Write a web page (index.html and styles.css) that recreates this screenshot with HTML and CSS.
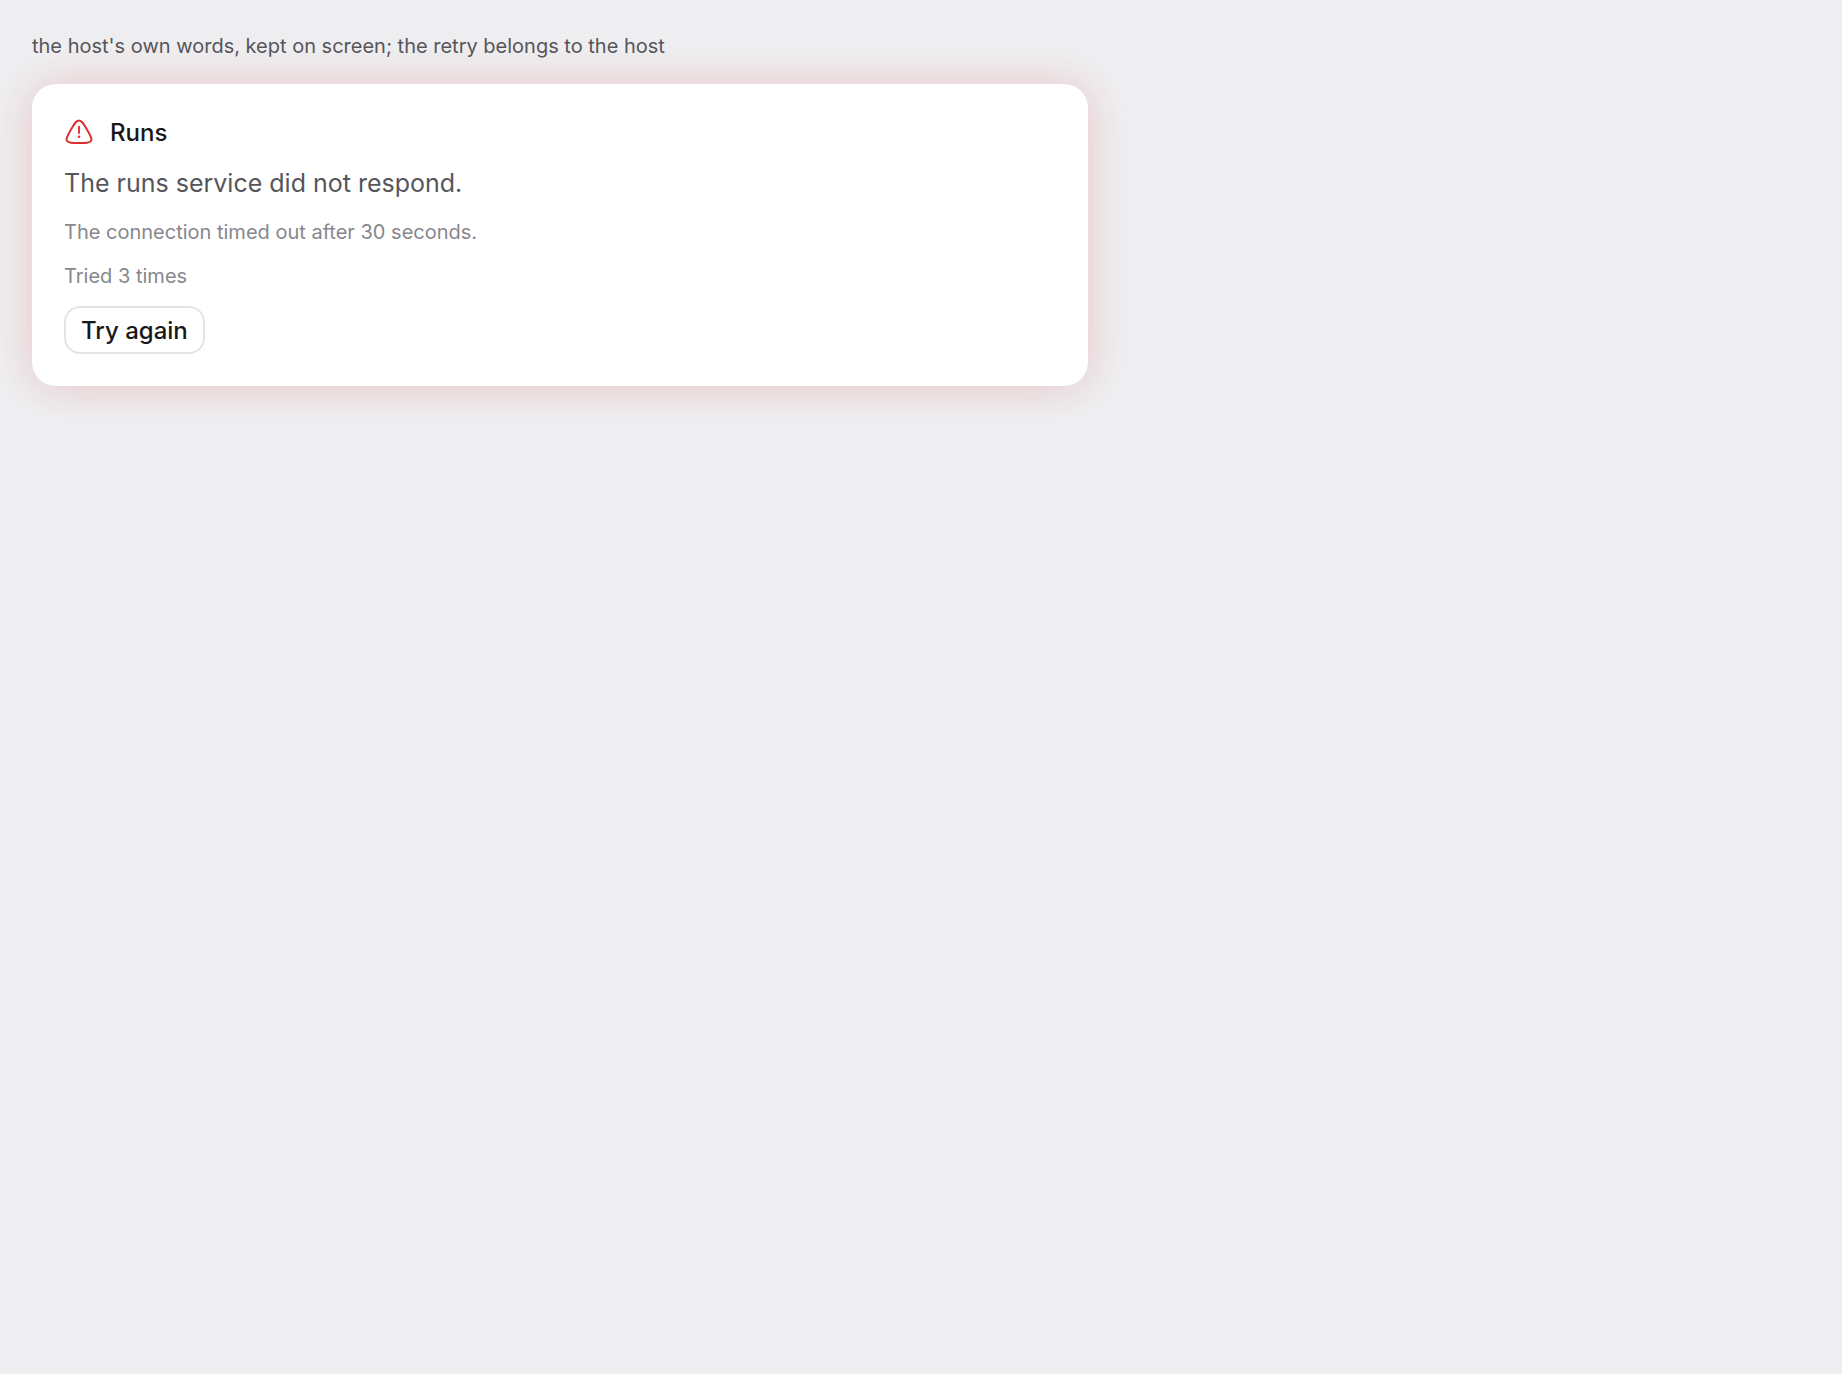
FILE: index.html
```html
<!DOCTYPE html>
<html lang="en">
<head>
    <meta charset="UTF-8">
    <meta name="viewport" content="width=device-width, initial-scale=1.0">
    <title>Runs</title>
    <link rel="stylesheet" href="styles.css">
</head>
<body>
    <main class="page">
        <p class="caption">the host's own words, kept on screen; the retry belongs to the host</p>
        <section class="card">
            <div class="card-header">
                <svg class="icon" viewBox="0 1 24 24" fill="none" aria-hidden="true">
                    <path stroke="currentColor" stroke-width="1.5" d="M5.312 10.762C8.23 5.587 9.689 3 12 3c2.31 0 3.77 2.587 6.688 7.762l.364.645c2.425 4.3 3.638 6.45 2.542 8.022S17.786 21 12.364 21h-.728c-5.422 0-8.134 0-9.23-1.571s.117-3.722 2.542-8.022z"/>
                    <path stroke="currentColor" stroke-width="1.5" stroke-linecap="round" d="M12 8v5"/>
                    <circle cx="12" cy="16" r="1" fill="currentColor"/>
                </svg>
                <h2>Runs</h2>
            </div>
            <p class="message">The runs service did not respond.</p>
            <p class="detail">The connection timed out after 30 seconds.</p>
            <p class="detail">Tried 3 times</p>
            <button class="retry" type="button">Try again</button>
        </section>
    </main>
</body>
</html>
```

FILE: styles.css
```css
*{
    box-sizing: border-box;
    margin: 0;
    padding: 0;
}
body{
    background-color: #eeeef0;
    font-family: Inter, "Liberation Sans", sans-serif;
}
.page{
    display: grid;
    gap: 24px;
    max-width: 1120px;
    padding: 32px;
}
.caption{
    color: #56565c;
    font-size: 20px;
    line-height: 28px;
}
.card{
    display: flex;
    flex-direction: column;
    align-items: flex-start;
    gap: 16px;
    padding: 32px;
    border-radius: 24px;
    background: #fff;
    box-shadow: 0 0 44px rgba(220, 38, 38, 0.18), 0 8px 48px rgba(0, 0, 0, 0.02);
}
.card-header{
    display: flex;
    align-items: center;
    gap: 16px;
}
.icon{
    width: 30px;
    height: 30px;
    color: #dc2f2f;
}
h2{
    color: #18181a;
    font-size: 24px;
    font-weight: 500;
    line-height: 34px;
}
.message{
    color: #56565c;
    font-size: 25px;
    line-height: 34px;
    padding-bottom: 2px;
}
.detail{
    color: #87878d;
    font-size: 20px;
    line-height: 28px;
}
.retry{
    height: 48px;
    padding: 0 15px;
    border: 2px solid #e4e4e6;
    border-radius: 16px;
    background: #fff;
    color: #18181a;
    font-family: inherit;
    font-size: 24px;
    font-weight: 500;
}
```
